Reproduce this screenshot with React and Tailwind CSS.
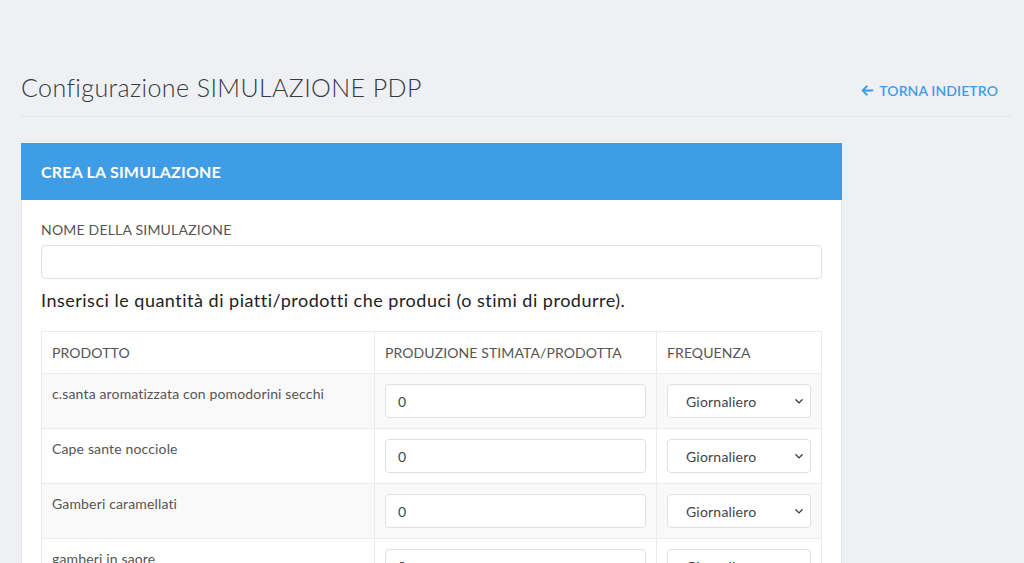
import React from 'react';

const rows = [
    'c.santa aromatizzata con pomodorini secchi',
    'Cape sante nocciole',
    'Gamberi caramellati',
    'gamberi in saore',
];

function ArrowLeft() {
    return (
        <svg width="13" height="13" viewBox="0 0 448 512" fill="currentColor" stroke="currentColor" strokeWidth="20">
            <path d="M9.4 233.4c-12.5 12.5-12.5 32.8 0 45.3l160 160c12.5 12.5 32.8 12.5 45.3 0s12.5-32.8 0-45.3L109.2 288H416c17.7 0 32-14.3 32-32s-14.3-32-32-32H109.3l105.3-105.4c12.5-12.5 12.5-32.8 0-45.3s-32.8-12.5-45.3 0l-160 160z" />
        </svg>
    );
}

function Chevron() {
    return (
        <svg width="10" height="10" viewBox="0 0 16 16" fill="none" stroke="#333" strokeWidth="2" strokeLinecap="round" strokeLinejoin="round">
            <path d="M3 6l5 5 5-5" />
        </svg>
    );
}

export default function App() {
    return (
        <div className="min-h-screen w-full bg-[#eff0f4] text-[#333]" style={{ fontFamily: 'Lato, "Noto Sans", sans-serif' }}>
            <div className="pl-5 pr-3 pt-[70px]">
                <div className="flex items-center justify-between h-[36px] pl-px pr-[14px]">
                    <h1 className="text-[25px] text-[#343a40] font-light tracking-[0.4px]">Configurazione SIMULAZIONE PDP</h1>
                    <a className="flex items-center gap-[5px] text-[14px] font-semibold text-[#3f9de6] mt-[4px] tracking-[0.1px]">
                        <ArrowLeft /> TORNA INDIETRO
                    </a>
                </div>
                <div className="h-px bg-[#e3e5ea] mt-[10px]" />

                <div className="mt-[26px] ml-px w-[821px] bg-white border border-[#e5e7eb] border-t-0">
                    <div className="h-[57px] -mx-px bg-[#3f9de6] flex items-center px-5">
                        <span className="text-white text-[16px] font-bold tracking-[0.2px]">CREA LA SIMULAZIONE</span>
                    </div>
                    <div className="px-[19px] pt-[20px]">
                        <label className="block text-[14px] text-[#555] leading-5 tracking-[0.2px]">NOME DELLA SIMULAZIONE</label>
                        <div className="mt-[5px] h-[34px] rounded border border-[#dfe1e5] bg-white" />
                        <p className="mt-[9px] text-[18px] text-[#222] leading-6 tracking-[0.5px]">Inserisci le quantità di piatti/prodotti che produci (o stimi di produrre).</p>

                        <table className="mt-[19px] w-full border-collapse text-[14px] text-[#555]">
                            <thead>
                                <tr className="h-[42px]">
                                    <th className="w-[333px] border border-[#e9ebee] text-left font-normal px-[10px] tracking-[0.1px]">PRODOTTO</th>
                                    <th className="w-[282px] border border-[#e9ebee] text-left font-normal px-[10px] tracking-[0.1px]">PRODUZIONE STIMATA/PRODOTTA</th>
                                    <th className="border border-[#e9ebee] text-left font-normal px-[10px] tracking-[0.1px]">FREQUENZA</th>
                                </tr>
                            </thead>
                            <tbody>
                                {rows.map((name, i) => (
                                    <tr key={name} className={i % 2 === 0 ? 'h-[55px] bg-[#f9f9f9]' : 'h-[55px] bg-white'}>
                                        <td className="border border-[#e9ebee] align-top px-[10px] pt-[9px] tracking-[0.15px]">{name}</td>
                                        <td className="border border-[#e9ebee] px-[10px]">
                                            <div className="h-[34px] rounded border border-[#dfe1e5] bg-white flex items-center px-3 text-[#444]">0</div>
                                        </td>
                                        <td className="border border-[#e9ebee] px-[10px]">
                                            <div className="h-[34px] rounded border border-[#dfe1e5] bg-white flex items-center justify-between pl-[18px] pr-[6px] text-[#444]">
                                                <span className="tracking-[0.2px]">Giornaliero</span>
                                                <Chevron />
                                            </div>
                                        </td>
                                    </tr>
                                ))}
                            </tbody>
                        </table>
                    </div>
                </div>
            </div>
        </div>
    );
}
